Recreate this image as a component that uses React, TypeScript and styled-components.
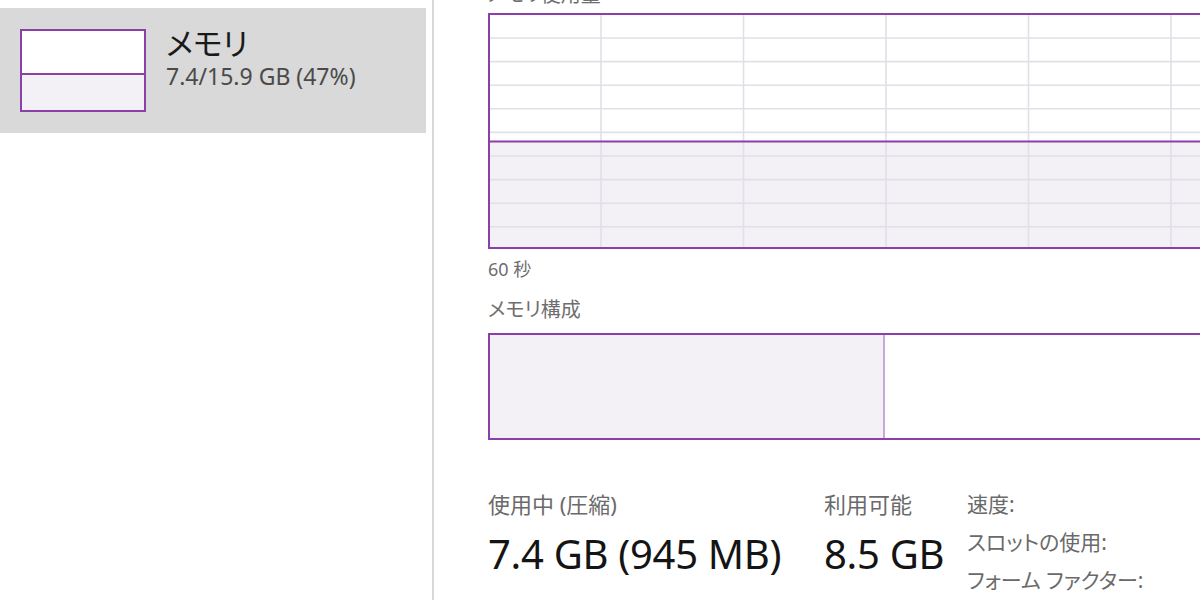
import { FC } from 'react';
import styled, { createGlobalStyle } from 'styled-components';

const PURPLE = '#8b3fa8';
const FILL = '#f3f1f6';
const GRID = '#e2dfe7';

const GlobalStyle = createGlobalStyle`
  html, body {
    margin: 0;
    padding: 0;
    background: #ffffff;
  }
  body {
    font-family: 'Noto Sans', 'Noto Sans CJK JP', sans-serif;
    font-feature-settings: 'palt';
  }
`;

const Page = styled.div`
  display: flex;
  width: 1200px;
  height: 600px;
  overflow: hidden;
`;

const Sidebar = styled.aside`
  flex: 0 0 434px;
  box-sizing: border-box;
  border-right: 2px solid #d9d9d9;
  padding-top: 8px;
`;

const SideItem = styled.div`
  display: flex;
  align-items: flex-start;
  gap: 20px;
  box-sizing: border-box;
  width: 426px;
  height: 125px;
  padding: 21px 0 0 20px;
  background: #d9d9d9;
`;

const Thumb = styled.div`
  display: grid;
  grid-template-rows: 42px 2px 1fr;
  box-sizing: border-box;
  width: 126px;
  height: 83px;
  border: 2px solid ${PURPLE};
  background: #ffffff;
`;

const ThumbLine = styled.div`
  background: ${PURPLE};
`;

const ThumbLow = styled.div`
  background: ${FILL};
`;

const SideText = styled.div`
  display: flex;
  flex-direction: column;
`;

const SideTitle = styled.div`
  font-size: 31px;
  line-height: 36px;
  color: #1a1a1a;
  margin-top: -4px;
`;

const SideSub = styled.div`
  font-size: 23px;
  line-height: 28px;
  margin-top: 1px;
  color: #4a4a4a;
`;

const Main = styled.main`
  flex: 1;
  min-width: 0;
  padding-left: 54px;
  overflow: hidden;
`;

const Label = styled.div<{ $size?: number; $gap?: number }>`
  font-size: ${(p) => p.$size ?? 20}px;
  line-height: ${(p) => Math.round((p.$size ?? 20) * 1.2)}px;
  color: #6e6e6e;
  margin-top: ${(p) => p.$gap ?? 0}px;
  white-space: nowrap;
`;

const GraphBox = styled.div`
  margin-top: 6px;
  width: 760px;
  height: 236px;
`;

const CompBar = styled.div<{ $used: number }>`
  display: grid;
  grid-template-columns: ${(p) => p.$used}px 2px 1fr;
  box-sizing: border-box;
  margin-top: 11px;
  width: 760px;
  height: 107px;
  border: 2px solid ${PURPLE};
  background: #ffffff;
`;

const CompUsed = styled.div`
  background: ${FILL};
`;

const CompSep = styled.div`
  background: #c7abd6;
`;

const Stats = styled.div`
  display: flex;
  align-items: flex-start;
  margin-top: 49px;
`;

const Stat = styled.div<{ $width: number }>`
  display: flex;
  flex-direction: column;
  width: ${(p) => p.$width}px;
`;

const StatLabel = styled.div`
  font-size: 22px;
  line-height: 30px;
  color: #6a6a6a;
  white-space: nowrap;
`;

const StatValue = styled.div`
  font-size: 40px;
  line-height: 48px;
  color: #141414;
  margin-top: 11px;
  white-space: nowrap;
  letter-spacing: -0.3px;
`;

const Props = styled.div`
  display: flex;
  flex-direction: column;
  padding-left: 2px;
`;

const PropRow = styled.div`
  font-size: 21px;
  line-height: 38px;
  color: #6a6a6a;
  white-space: nowrap;
  &:first-child {
    margin-top: -4px;
  }
`;

const UsageGraph: FC<{ used: number }> = ({ used }) => {
  const w = 760;
  const h = 236;
  const lineY = h - 2 - (h - 4) * used;
  const rows = Array.from({ length: 9 }, (_, i) => 25 + i * 23.6);
  const cols = Array.from({ length: 5 }, (_, i) => 113 + i * 142.5);
  return (
    <svg width={w} height={h} viewBox={`0 0 ${w} ${h}`}>
      <rect x={0} y={0} width={w} height={h} fill="#ffffff" />
      <rect x={0} y={lineY} width={w} height={h - lineY} fill={FILL} />
      {rows.map((y) => (
        <line key={y} x1={0} x2={w} y1={y} y2={y} stroke={GRID} strokeWidth={1.6} />
      ))}
      {cols.map((x) => (
        <line key={x} x1={x} x2={x} y1={0} y2={h} stroke={GRID} strokeWidth={1.6} />
      ))}
      <line x1={0} x2={w} y1={lineY} y2={lineY} stroke={PURPLE} strokeWidth={2} />
      <rect x={1} y={1} width={w - 2} height={h - 2} fill="none" stroke={PURPLE} strokeWidth={2} />
    </svg>
  );
};

export default function App() {
  return (
    <Page>
      <GlobalStyle />
      <Sidebar>
        <SideItem>
          <Thumb>
            <div />
            <ThumbLine />
            <ThumbLow />
          </Thumb>
          <SideText>
            <SideTitle>メモリ</SideTitle>
            <SideSub>7.4/15.9 GB (47%)</SideSub>
          </SideText>
        </SideItem>
      </Sidebar>
      <Main>
        <Label $size={20} $gap={-17}>メモリ使用量</Label>
        <GraphBox>
          <UsageGraph used={0.455} />
        </GraphBox>
        <Label $size={18} $gap={9}>60 秒</Label>
        <Label $size={20} $gap={18}>メモリ構成</Label>
        <CompBar $used={393}>
          <CompUsed />
          <CompSep />
          <div />
        </CompBar>
        <Stats>
          <Stat $width={336}>
            <StatLabel>使用中 (圧縮)</StatLabel>
            <StatValue>7.4 GB (945 MB)</StatValue>
          </Stat>
          <Stat $width={141}>
            <StatLabel>利用可能</StatLabel>
            <StatValue>8.5 GB</StatValue>
          </Stat>
          <Props>
            <PropRow>速度:</PropRow>
            <PropRow>スロットの使用:</PropRow>
            <PropRow>フォーム ファクター:</PropRow>
          </Props>
        </Stats>
      </Main>
    </Page>
  );
}
